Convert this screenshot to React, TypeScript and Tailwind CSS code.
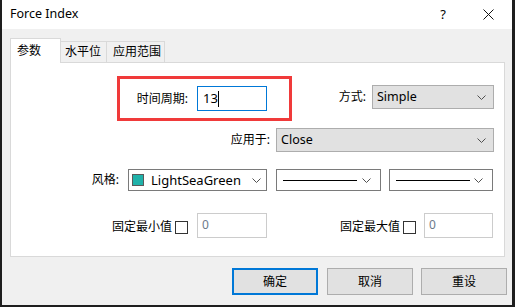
const font = "font-['Noto_Sans','Noto_Sans_CJK_SC',sans-serif]";

function Chevron({ className = "" }: { className?: string }) {
  return (
    <svg width="9" height="5" viewBox="0 0 9 5" className={className}>
      <path d="M0.5 0.5 L4.5 4.5 L8.5 0.5" fill="none" stroke="#505050" strokeWidth="1" />
    </svg>
  );
}

function GraySelect({ value, width }: { value: string; width: string }) {
  return (
    <div className={`${width} h-[24px] flex items-center justify-between bg-[#e1e1e1] border border-[#adadad] pl-[4px] pr-[7px]`}>
      <span className="text-[12.5px] leading-none text-black">{value}</span>
      <Chevron />
    </div>
  );
}

function LineSelect({ width }: { width: string }) {
  return (
    <div className={`${width} h-[22px] flex items-center bg-white border border-[#7a7a7a] pl-[6px] pr-[9px]`}>
      <div className="w-[74px] h-px bg-black" />
      <div className="flex-1" />
      <Chevron />
    </div>
  );
}

function Checkbox() {
  return <div className="w-[13px] h-[13px] border border-[#333333] bg-white" />;
}

function DisabledInput({ width }: { width: string }) {
  return (
    <div className={`${width} h-[25px] bg-white border border-[#cccccc] pl-[4px] pt-[4px] text-[12px] leading-[14px] text-[#6d7a8a]`}>
      0
    </div>
  );
}

export default function App() {
  return (
    <div className={`w-[515px] h-[307px] bg-[#1e1e1e] flex ${font}`}>
      <div className="ml-[2px] w-[510px] h-[305px] bg-[#f0f0f0] flex flex-col">
        {/* title bar */}
        <div className="h-[29px] bg-white flex items-center">
          <span className="ml-[8px] text-[12.5px] leading-none text-black">Force Index</span>
          <div className="flex-1" />
          <span className="text-[13px] leading-none text-black mr-[37px]">?</span>
          <svg width="11" height="11" viewBox="0 0 11 11" className="mr-[18px]">
            <path d="M0.5 0.5 L10.5 10.5 M10.5 0.5 L0.5 10.5" stroke="#111" strokeWidth="1" />
          </svg>
        </div>

        {/* tabs */}
        <div className="mt-[9px] ml-[8px] flex items-end -mb-px relative z-10">
          <div className="w-[51px] h-[25px] bg-white border-l border-t border-r border-[#d9d9d9] pl-[6px] pt-[5px] text-[12px] leading-[14px] text-black">
            参数
          </div>
          <div className="w-[46px] h-[21px] mb-px bg-[#f0f0f0] border-t border-r border-[#d9d9d9] pl-[4px] pt-[3px] text-[12px] leading-[14px] text-black">
            水平位
          </div>
          <div className="w-[58px] h-[21px] mb-px bg-[#f0f0f0] border-t border-r border-[#d9d9d9] pl-[6px] pt-[3px] text-[12px] leading-[14px] text-black">
            应用范围
          </div>
        </div>

        {/* panel */}
        <div className="ml-[8px] w-[495px] h-[195px] bg-white border border-[#d9d9d9] flex flex-col text-[12px] text-black">
          {/* row 1 */}
          <div className="mt-[13px] flex items-start">
            <div className="ml-[106px] w-[175px] h-[45px] border-[3px] border-[#f03a3a] flex items-center">
              <span className="w-[68px] text-right leading-none">时间周期:</span>
              <div className="ml-[9px] w-[70px] h-[25px] border border-[#0078d7] flex items-center pl-[5px]">
                <span className="leading-none text-[13px]">13</span>
                <div className="w-px h-[16px] bg-black" />
              </div>
            </div>
            <span className="mt-[9px] w-[74px] h-[24px] flex items-center justify-end leading-none">方式:</span>
            <div className="mt-[9px] ml-[6px]">
              <GraySelect value="Simple" width="w-[122px]" />
            </div>
          </div>

          {/* row 2 */}
          <div className="mt-[7px] flex items-center">
            <span className="w-[259px] text-right leading-none">应用于:</span>
            <div className="ml-[6px]">
              <GraySelect value="Close" width="w-[218px]" />
            </div>
          </div>

          {/* row 3 */}
          <div className="mt-[17px] flex items-center">
            <span className="w-[108px] text-right leading-none">风格:</span>
            <div className="ml-[9px] w-[139px] h-[22px] flex items-center bg-white border border-[#7a7a7a] pl-[3px] pr-[5px]">
              <div className="w-[12px] h-[12px] bg-[#20b2aa] border border-[#5a5a5a]" />
              <span className="ml-[7px] text-[13px] leading-none">LightSeaGreen</span>
              <div className="flex-1" />
              <Chevron />
            </div>
            <div className="ml-[9px]">
              <LineSelect width="w-[105px]" />
            </div>
            <div className="ml-[8px]">
              <LineSelect width="w-[104px]" />
            </div>
          </div>

          {/* row 4 */}
          <div className="mt-[22px] flex items-center">
            <span className="w-[161px] text-right leading-none mt-[3px]">固定最小值</span>
            <div className="ml-[3px] mt-[3px]">
              <Checkbox />
            </div>
            <div className="ml-[9px]">
              <DisabledInput width="w-[70px]" />
            </div>
            <span className="w-[133px] text-right leading-none mt-[3px]">固定最大值</span>
            <div className="ml-[3px] mt-[3px]">
              <Checkbox />
            </div>
            <div className="ml-[8px]">
              <DisabledInput width="w-[69px]" />
            </div>
          </div>
        </div>

        {/* buttons */}
        <div className="mt-[11px] ml-[230px] flex gap-[9px] text-[12px] text-black">
          <button className="w-[86px] h-[27px] bg-[#e1e1e1] border-2 border-[#0078d7] leading-none">确定</button>
          <button className="w-[86px] h-[27px] bg-[#e1e1e1] border border-[#adadad] leading-none">取消</button>
          <button className="w-[86px] h-[27px] bg-[#e1e1e1] border border-[#adadad] leading-none -ml-px">重设</button>
        </div>
      </div>
    </div>
  );
}
